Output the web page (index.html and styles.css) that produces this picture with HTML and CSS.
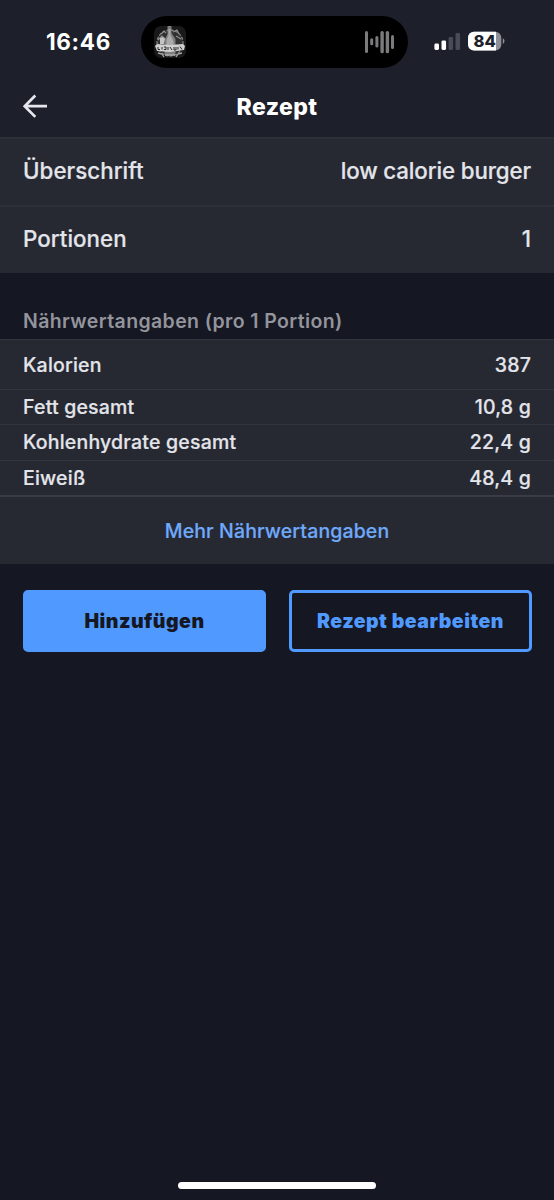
FILE: index.html
```
<!DOCTYPE html>
<html lang="de">
<head>
<meta charset="utf-8">
<title>Rezept</title>
<link rel="stylesheet" href="styles.css">
</head>
<body>
<div class="screen">
  <div class="statusbar">
    <div class="time">16:46</div>
    <div class="island">
      <svg class="cover" viewBox="0 0 34 34" width="34" height="34">
        <rect x="1" y="1" width="32" height="32" rx="7" fill="#191919"/>
        <circle cx="17" cy="18" r="13" fill="#303030" stroke="#858585" stroke-width="1.3" stroke-dasharray="3 1.4"/>
        <path d="M8 9l3-3 2 2M20 7l4-2 2 4M5 15l4-4 3 3M23 11l5 3" fill="none" stroke="#8f8f8f" stroke-width="1.2"/>
        <path d="M14.5 1h4v7l4 6v16h-11V15l3-6z" fill="#7e7e7e"/>
        <path d="M15.5 4h2v6l3 6v4h-7v-5l2-5z" fill="#aaa"/>
        <path d="M7 13l3-1 2 2-1 5H7z" fill="#c4c4c4"/>
        <path d="M2 21l2-2 13 1 13-1 2 2-1 4-14 2-13-1z" fill="#d0d0d0"/>
        <path d="M5 22v2.500h2M9 22v2.500M11 22h2v2.500h-2M15 22v3M17 22l2 3M21 22v3h2v-3M25 22v2.500M27 21.500l2 3" stroke="#282828" stroke-width="1" fill="none"/>
        <path d="M5 28l4 1 2 3M29 28l-4 1-2 3M12 30h10" fill="none" stroke="#aaa" stroke-width="1.3"/>
      </svg>
      <svg class="wave" viewBox="0 0 30 24" width="30" height="24">
        <g fill="#7b7b7d">
          <rect x="0" y="1" width="3" height="22" rx="1.500"/>
          <rect x="5.200" y="8.200" width="3" height="7" rx="1.500"/>
          <rect x="10.400" y="6" width="3" height="11.500" rx="1.500"/>
          <rect x="15.400" y="1" width="3.400" height="22.300" rx="1.600"/>
          <rect x="20.700" y="1" width="3.400" height="22.300" rx="1.600"/>
          <rect x="26" y="5" width="3" height="14" rx="1.500"/>
        </g>
      </svg>
    </div>
    <svg class="signal" viewBox="0 0 27 18" width="27" height="18">
      <rect x=".4" y="10.500" width="4.600" height="6.500" rx="1.400" fill="#fff"/>
      <rect x="7.500" y="7.400" width="4.600" height="9.600" rx="1.400" fill="#fff"/>
      <rect x="14.500" y="4" width="4.600" height="13" rx="1.400" fill="#494b56"/>
      <rect x="21.500" y="0" width="4.600" height="17" rx="1.400" fill="#494b56"/>
    </svg>
    <svg class="battery" viewBox="0 0 38 20" width="38" height="20">
      <defs><clipPath id="cell"><rect x="0" y=".8" width="33.300" height="18.600" rx="6"/></clipPath></defs>
      <g clip-path="url(#cell)"><rect width="34" height="20" fill="#8f9097"/><rect width="28" height="20" fill="#fff"/></g>
      <path d="M34.800 7.300q1.700.8 1.700 2.800t-1.700 2.800z" fill="#8f9097"/>
      <text x="16.600" y="15.900" class="level">84</text>
    </svg>
  </div>
  <header class="nav">
    <svg class="back" viewBox="0 0 26 26" width="26" height="26">
      <path d="M13.300 1.500L2.700 12.200l10.600 10.700M2.700 12.200H25" fill="none" stroke="#e6e7ec" stroke-width="2.700"/>
    </svg>
    <h1 class="title">Rezept</h1>
  </header>
  <section class="details">
    <div class="row"><span>Überschrift</span><span class="name">low calorie burger</span></div>
    <div class="row"><span>Portionen</span><span>1</span></div>
  </section>
  <h2 class="section-title">Nährwertangaben (pro 1 Portion)</h2>
  <section class="nutrition">
    <div class="fact fact-main"><span>Kalorien</span><span>387</span></div>
    <div class="fact"><span>Fett gesamt</span><span>10,8 g</span></div>
    <div class="fact"><span>Kohlenhydrate gesamt</span><span>22,4 g</span></div>
    <div class="fact"><span>Eiweiß</span><span>48,4 g</span></div>
    <a class="more">Mehr Nährwertangaben</a>
  </section>
  <div class="actions">
    <button class="btn btn-primary">Hinzufügen</button>
    <button class="btn btn-outline">Rezept bearbeiten</button>
  </div>
  <div class="home"></div>
</div>
</body>
</html>
```
FILE: styles.css
```
* { box-sizing: border-box; }
body {
  margin: 0;
  background: #151722;
  color: #e4e5ea;
  font-family: Inter, "Liberation Sans", sans-serif;
  font-weight: 500;
}
.screen { display: flex; flex-direction: column; height: 1200px; }
.statusbar {
  display: flex;
  align-items: center;
  height: 76px;
  padding: 0 0 0 46px;
  background: #1d1f2b;
}
.time { width: 95px; padding-bottom: 1px; margin-top: 8px; color: #fff; font-size: 22.500px; font-weight: 700; letter-spacing: .65px; line-height: 28px; white-space: nowrap; }
.island {
  display: flex;
  align-items: center;
  justify-content: space-between;
  width: 267px;
  height: 52px;
  margin-top: 7px;
  padding: 0 13px 0 12px;
  border-radius: 26px;
  background: #000;
}
.signal { margin: 7px 7px 0 26px; }
.battery { margin-top: 6px; }
.level { fill: #1d1f2b; font-size: 16.500px; font-weight: 800; text-anchor: middle; }
.nav {
  display: grid;
  grid-template-columns: 26px 1fr 26px;
  align-items: center;
  height: 61px;
  padding: 0 22px;
  background: #1d1f2b;
}
.title { margin: 0; color: #fff; font-size: 23px; font-weight: 800; letter-spacing: .4px; text-align: center; }
.row, .fact { display: flex; justify-content: space-between; align-items: center; padding: 0 23px; background: #262832; -webkit-text-stroke: .2px; }
.row { height: 68px; padding-bottom: 3px; border-top: 2px solid #2d2f39; font-size: 22.300px; letter-spacing: .05px; }
.name { letter-spacing: -.12px; }
.section-title {
  height: 66px;
  margin: 0;
  padding: 35px 23px 0;
  color: #93949c;
  font-size: 19.500px;
  font-weight: 600;
  letter-spacing: .38px;
  line-height: 27px;
}
.fact { height: 35.300px; border-top: 1px solid #32343f; font-size: 19.500px; letter-spacing: .2px; }
.fact-main { height: 50px; }
.more {
  display: flex;
  align-items: center;
  justify-content: center;
  height: 69px;
  padding-top: 1px;
  border-top: 2px solid #393b45;
  background: #262832;
  color: #6fa9fa;
  font-size: 19.500px;
  letter-spacing: .12px;
  -webkit-text-stroke: .2px;
}
.actions { display: grid; grid-template-columns: 1fr 1fr; gap: 23px; padding: 26px 22px 0 23px; }
.btn { height: 62px; padding: 0; border: 3px solid #5099ff; border-radius: 5px; font: 900 19.500px Inter, "Liberation Sans", sans-serif; letter-spacing: .5px; white-space: nowrap; }
.btn-primary { background: #5099ff; color: #151722; }
.btn-outline { background: transparent; color: #5099ff; }
.home { width: 198px; height: 7px; margin: auto auto 11px; border-radius: 4px; background: #fff; }
```
